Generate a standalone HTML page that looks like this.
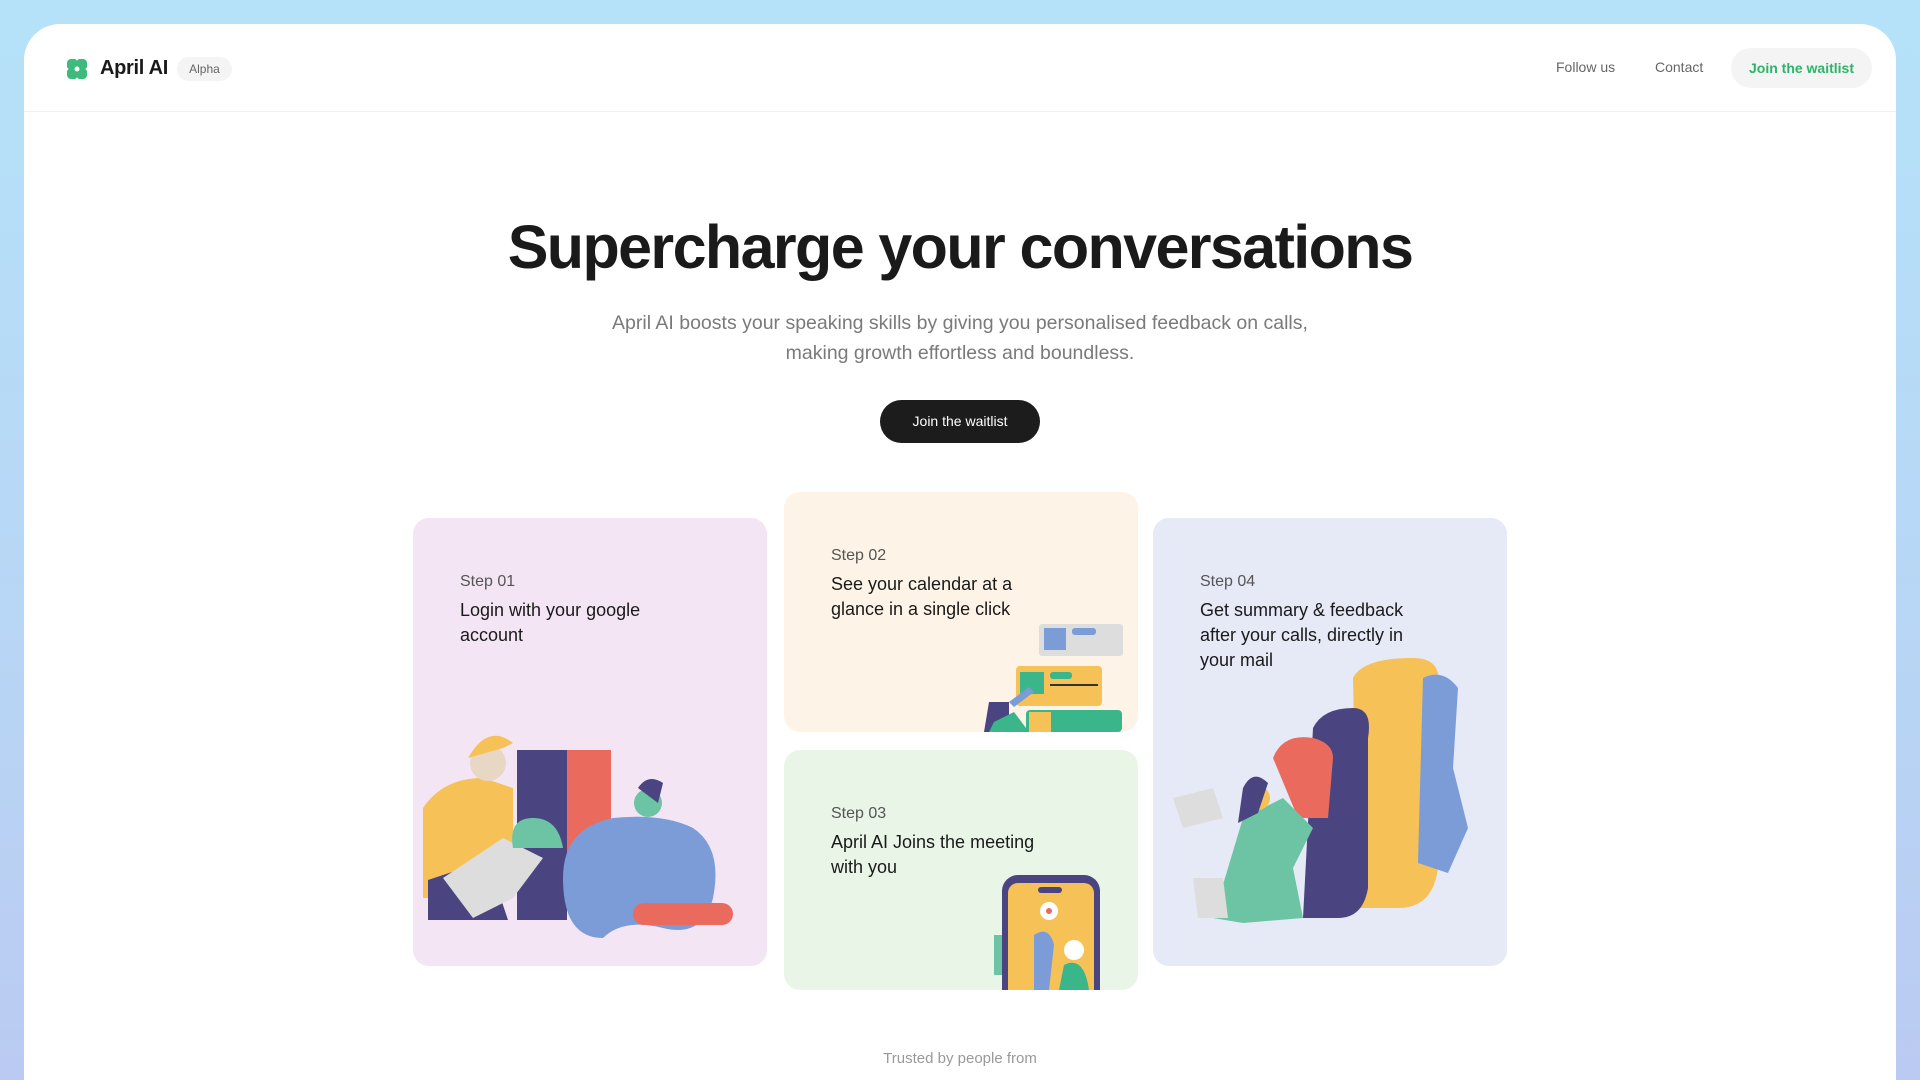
<!DOCTYPE html>
<html><head><meta charset="utf-8"><style>
*{margin:0;padding:0;box-sizing:border-box}
html,body{width:1920px;height:1080px;overflow:hidden}
body{background:linear-gradient(180deg,#b5e2f9 0%,#b8d3f4 70%,#bbcaf2 100%);font-family:"Liberation Sans",sans-serif}
.main{position:absolute;left:24px;top:24px;width:1872px;height:1056px;background:#fff;border-radius:36px 36px 0 0;overflow:hidden}
.hdr{position:absolute;left:0;top:0;width:100%;height:88px;border-bottom:1px solid #f0f0f0}
.logo{position:absolute;left:43px;top:35px;width:20px;height:20px}
.brand{position:absolute;left:76px;top:33px;font-size:20px;font-weight:bold;color:#1a1a1a;letter-spacing:-0.3px}
.alpha{position:absolute;left:153px;top:33px;width:55px;height:24px;border-radius:12px;background:#f4f4f4;font-size:12px;color:#666;text-align:center;line-height:24px}
.nav{position:absolute;top:35px;font-size:14px;color:#666}
.jw{position:absolute;left:1707px;top:24px;width:141px;height:40px;border-radius:20px;background:#f4f4f4;color:#2bb56a;font-size:14px;font-weight:bold;text-align:center;line-height:40px}
h1{position:absolute;left:0;width:1872px;top:188px;text-align:center;font-size:61px;font-weight:bold;color:#1a1a1a;letter-spacing:-1.6px}
.sub{position:absolute;left:0;width:1872px;top:284px;text-align:center;font-size:19.5px;line-height:30px;color:#7a7a7a}
.btn{position:absolute;left:856px;top:376px;width:160px;height:43px;border-radius:22px;background:#1c1c1c;color:#fff;font-size:14px;text-align:center;line-height:43px}
.card{position:absolute;border-radius:16px;overflow:hidden}
.step{position:absolute;left:47px;font-size:16px;color:#555}
.tt{position:absolute;left:47px;font-size:18px;line-height:25px;color:#1a1a1a;width:215px}
.trust{position:absolute;left:0;width:1872px;top:1026px;text-align:center;font-size:15px;color:#999}
</style></head><body>
<div class="main">
<div class="hdr">
<svg class="logo" viewBox="0 0 20 20"><path d="M4 0h3a3 3 0 0 1 3 2 3 3 0 0 1 3-2h3a4 4 0 0 1 4 4v3a3 3 0 0 1-2 3 3 3 0 0 1 2 3v3a4 4 0 0 1-4 4h-3a3 3 0 0 1-3-2 3 3 0 0 1-3 2H4a4 4 0 0 1-4-4v-3a3 3 0 0 1 2-3 3 3 0 0 1-2-3V4a4 4 0 0 1 4-4z" fill="#3dbb7c"/><circle cx="10" cy="10" r="2.5" fill="#fff"/></svg>
<div class="brand">April AI</div>
<div class="alpha">Alpha</div>
<div class="nav" style="left:1532px">Follow us</div>
<div class="nav" style="left:1631px">Contact</div>
<div class="jw">Join the waitlist</div>
</div>
<h1>Supercharge your conversations</h1>
<div class="sub">April AI boosts your speaking skills by giving you personalised feedback on calls,<br>making growth effortless and boundless.</div>
<div class="btn">Join the waitlist</div>

<div class="card" style="left:389px;top:494px;width:354px;height:448px;background:#f3e5f4">
<div class="step" style="top:55px">Step 01</div>
<div class="tt" style="top:80px">Login with your google account</div>
<svg style="position:absolute;left:0;top:210px" width="354" height="238" viewBox="0 0 354 238">
<rect x="104" y="22" width="50" height="170" fill="#4a4580"/><rect x="154" y="22" width="44" height="150" fill="#ea6a5e"/>
<path d="M10 80q20-30 60-30l30 10 0 60-50 50-40 0z" fill="#f6c156"/>
<path d="M15 192l80 0-20-60-60 20z" fill="#4a4580"/>
<path d="M30 150l60-40 40 20-30 40-40 20z" fill="#ddd"/>
<circle cx="75" cy="35" r="18" fill="#e8d7c5"/><path d="M55 30q20-35 45-15l-10 5z" fill="#f6c156"/>
<path d="M100 120q-5-30 20-30t30 30z" fill="#6cc4a4"/>
<path d="M150 150q0-50 50-60 50-5 80 10 30 20 20 70-10 40-50 30-40-10-60 10-40 0-40-60z" fill="#7b9cd6"/>
<circle cx="235" cy="75" r="14" fill="#6cc4a4"/><path d="M225 60q10-15 25-5l-5 20z" fill="#4a4580"/>
<rect x="220" y="175" width="100" height="22" rx="11" fill="#ea6a5e"/>
</svg>
</div>

<div class="card" style="left:760px;top:468px;width:354px;height:240px;background:#fdf4e7">
<div class="step" style="top:55px">Step 02</div>
<div class="tt" style="top:80px">See your calendar at a glance in a single click</div>
<svg style="position:absolute;left:180px;top:130px" width="174" height="110" viewBox="0 0 174 110">
<rect x="75" y="2" width="84" height="32" rx="3" fill="#ddd"/><rect x="80" y="6" width="22" height="22" fill="#7b9cd6"/><rect x="108" y="6" width="24" height="7" rx="3" fill="#7b9cd6"/>
<rect x="52" y="44" width="86" height="40" rx="4" fill="#f6c156"/><rect x="56" y="50" width="24" height="22" fill="#3bb58a"/><rect x="86" y="50" width="22" height="7" rx="3" fill="#3bb58a"/><rect x="86" y="62" width="48" height="2" fill="#333"/>
<rect x="62" y="88" width="96" height="22" rx="4" fill="#3bb58a"/><rect x="65" y="90" width="22" height="20" fill="#f6c156"/>
<path d="M25 80h20v30h-25z" fill="#4a4580"/><path d="M30 100l20-10 15 20h-40z" fill="#3bb58a"/><path d="M45 80l20-15 5 5-20 15z" fill="#7b9cd6"/>
</svg>
</div>

<div class="card" style="left:760px;top:726px;width:354px;height:240px;background:#e9f6e7">
<div class="step" style="top:55px">Step 03</div>
<div class="tt" style="top:80px">April AI Joins the meeting with you</div>
<svg style="position:absolute;left:210px;top:125px" width="110" height="115" viewBox="0 0 110 115">
<rect x="8" y="0" width="98" height="130" rx="16" fill="#4a4580"/><rect x="14" y="8" width="86" height="120" rx="10" fill="#f6c156"/>
<rect x="44" y="12" width="24" height="6" rx="3" fill="#4a4580"/><circle cx="55" cy="36" r="9" fill="#fff"/><circle cx="55" cy="36" r="3" fill="#ea6a5e"/>
<path d="M40 60q15-10 20 10l-5 45h-15z" fill="#7b9cd6"/><path d="M70 90q20-10 25 25h-30z" fill="#3bb58a"/><circle cx="80" cy="75" r="10" fill="#fff"/>
<rect x="0" y="60" width="8" height="40" fill="#6cc4a4"/>
</svg>
</div>

<div class="card" style="left:1129px;top:494px;width:354px;height:448px;background:#e6e9f6">
<div class="step" style="top:55px">Step 04</div>
<div class="tt" style="top:80px;width:230px">Get summary &amp; feedback after your calls, directly in your mail</div>
<svg style="position:absolute;left:0;top:140px" width="354" height="308" viewBox="0 0 354 308">
<path d="M200 20q10-20 60-20 30 0 25 30v180q-5 40-40 40h-40z" fill="#f6c156"/>
<path d="M270 20q20-10 35 10l-5 80 15 60-20 45-30-10z" fill="#7b9cd6"/>
<path d="M160 70q10-20 40-20 20 0 15 30v150q-5 30-30 30h-35z" fill="#4a4580"/>
<path d="M120 100q10-25 40-20 20 5 20 20l-5 60-30 0z" fill="#ea6a5e"/>
<path d="M60 260l30-100 40-20 30 30-20 40 10 50-60 5z" fill="#6cc4a4"/>
<circle cx="105" cy="140" r="12" fill="#f6c156"/><path d="M90 130q10-20 25-5l-10 30-20 10z" fill="#4a4580"/>
<path d="M20 140l40-10 10 30-40 10z" fill="#ddd"/><path d="M40 220l30 0 5 40-30 0z" fill="#ddd"/>
</svg>
</div>

<div class="trust">Trusted by people from</div>
</div>
</body></html>
